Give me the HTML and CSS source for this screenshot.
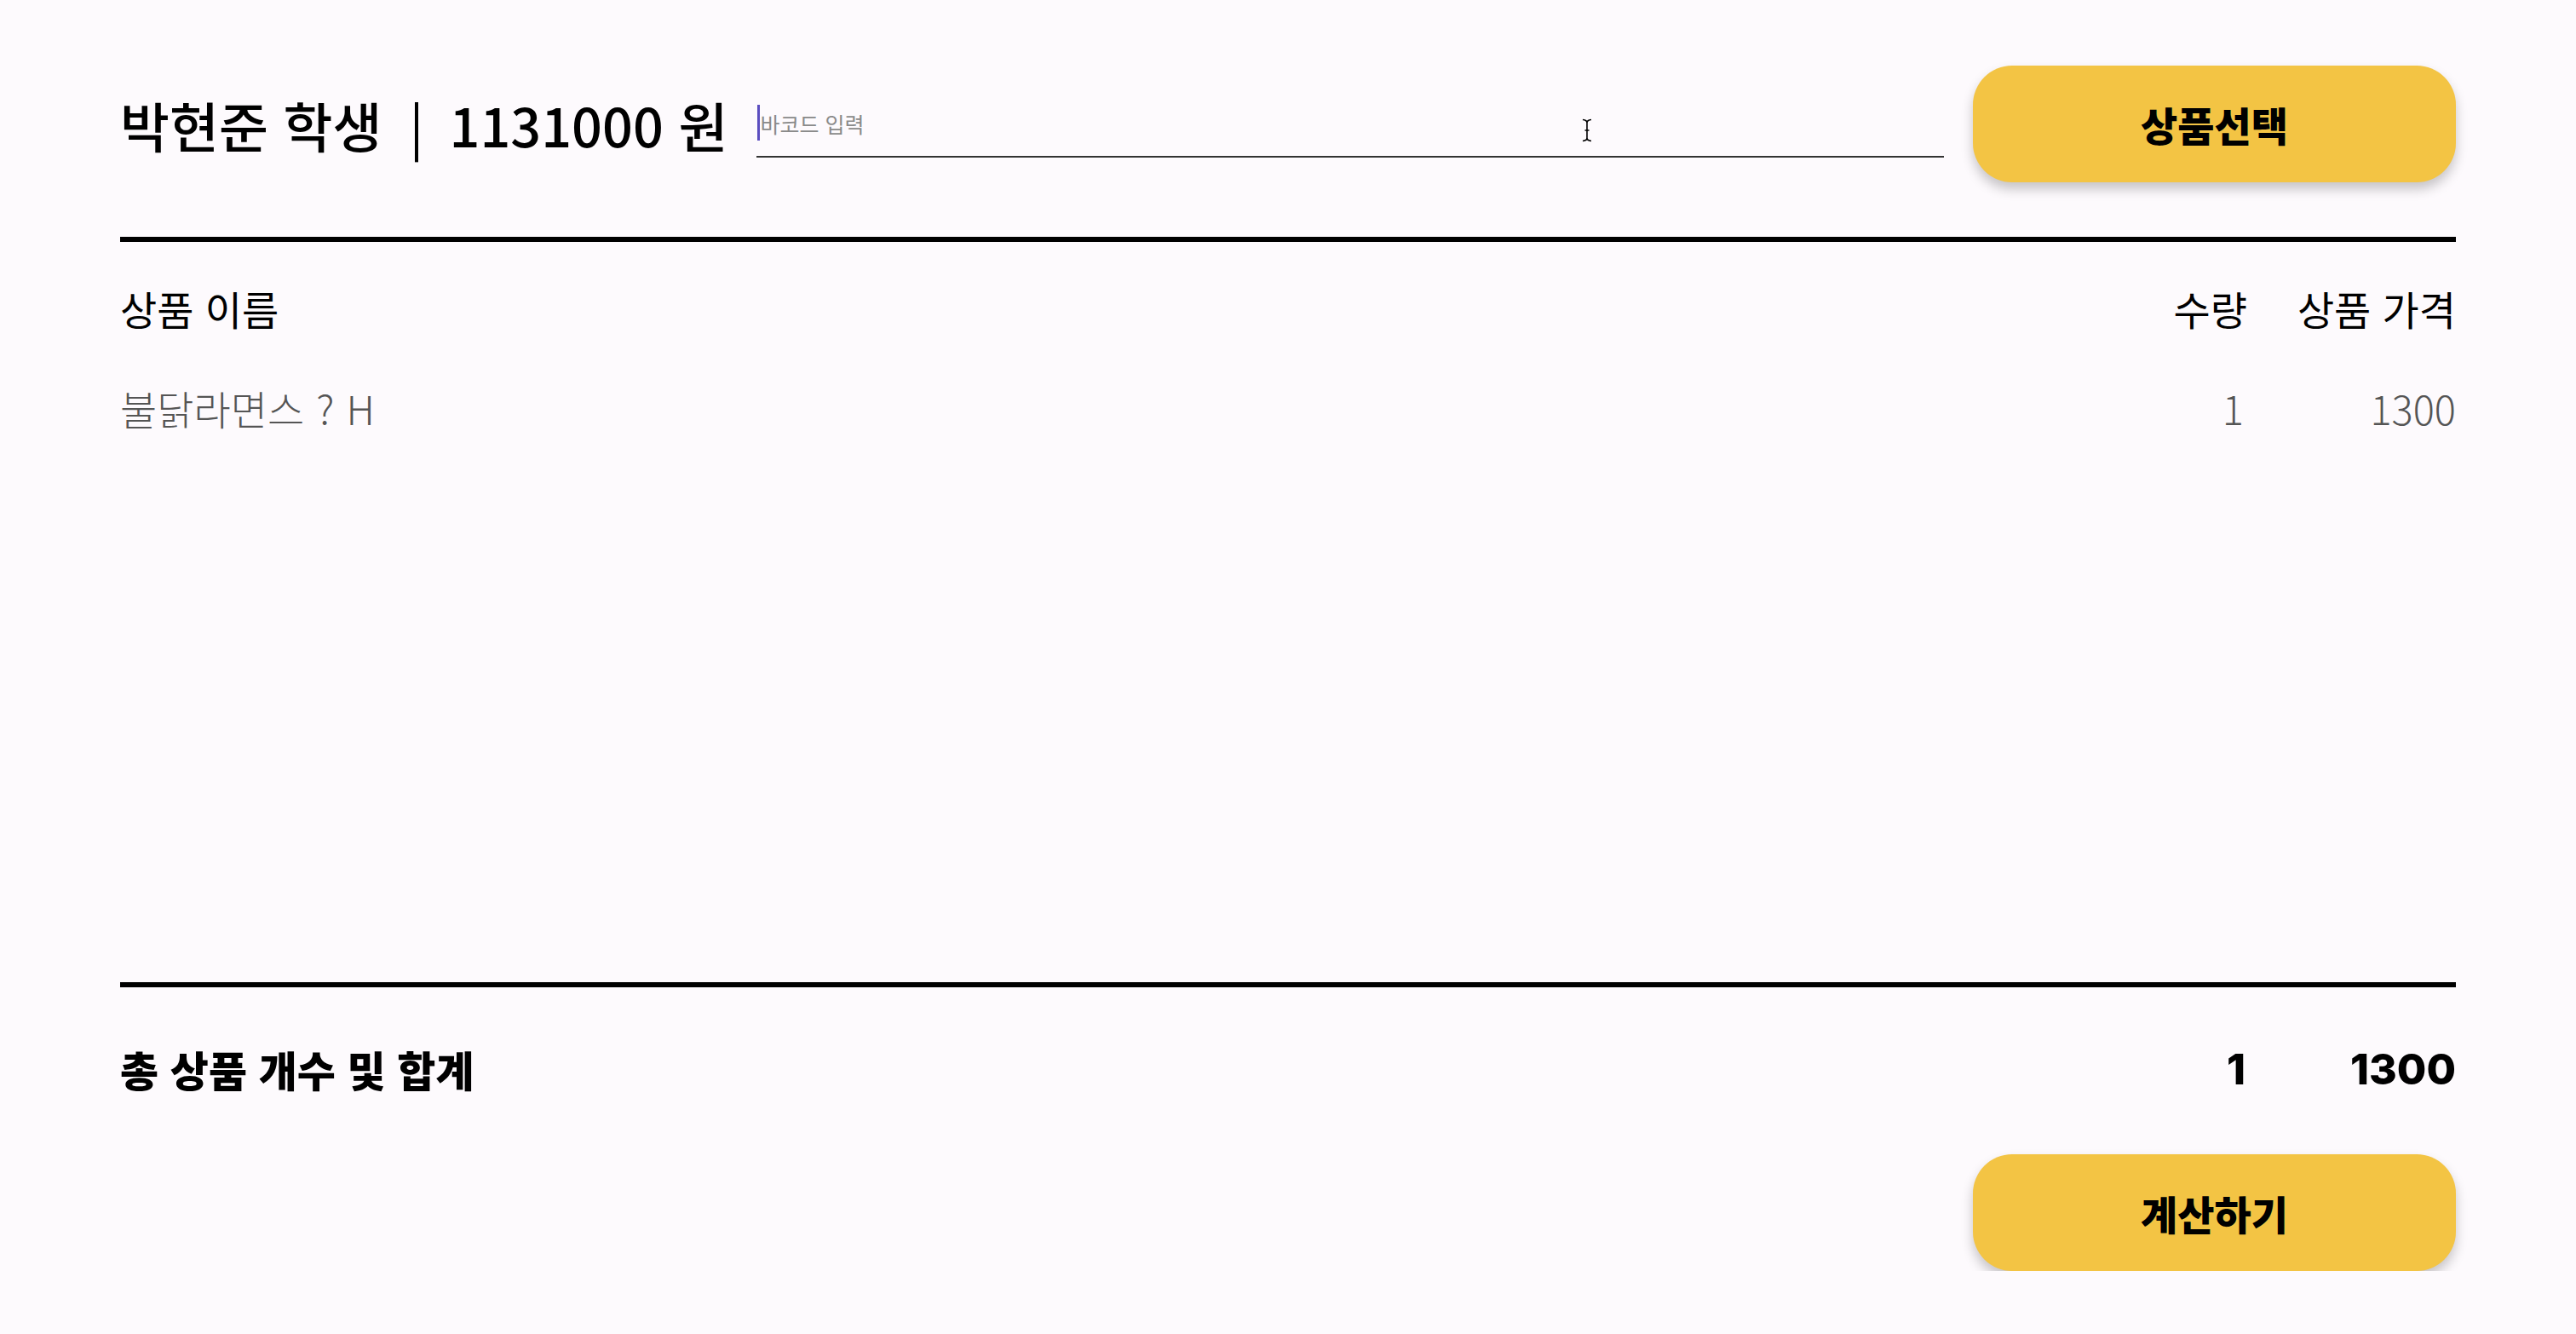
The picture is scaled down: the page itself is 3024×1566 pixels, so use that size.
FILE: index.html
```html
<!DOCTYPE html>
<html lang="ko">
<head>
<meta charset="utf-8">
<title>계산</title>
<link rel="stylesheet" href="styles.css">
</head>
<body>
<div class="app">
  <header class="top">
    <h1 class="title"><span>박현준 학생</span><span class="sep">|</span><span>1131000 원</span></h1>
    <div class="barcode">
      <input class="barcode-input" type="text" placeholder="바코드 입력">
      <span class="caret"></span>
      <svg class="ibeam" width="14" height="28" viewBox="0 0 14 28"><path d="M2 1.5 Q7 2 7 5 Q7 2 12 1.5 M7 5 V23 M2 26.5 Q7 26 7 23 Q7 26 12 26.5 M4.5 14 H9.5" fill="none" stroke="#000" stroke-width="1.6"/></svg>
    </div>
    <button class="btn">상품선택</button>
  </header>
  <hr class="rule">
  <section class="list">
    <div class="row head">
      <span class="c-name">상품 이름</span>
      <span class="c-qty">수량</span>
      <span class="c-price">상품 가격</span>
    </div>
    <div class="row item">
      <span class="c-name">불닭라면스<span class="q">?</span>H</span>
      <span class="c-qty">1</span>
      <span class="c-price">1300</span>
    </div>
  </section>
  <hr class="rule">
  <div class="row total">
    <span class="c-name">총 상품 개수 및 합계</span>
    <span class="c-qty num">1</span>
    <span class="c-price num">1300</span>
  </div>
  <div class="actions">
    <button class="btn">계산하기</button>
  </div>
</div>
</body>
</html>
```

FILE: styles.css
```css
html, body {
  margin: 0;
  padding: 0;
  background: #fdfafd;
}
body {
  font-family: "Noto Sans CJK KR", "Noto Sans", sans-serif;
  color: #000;
}
.app {
  padding: 77px 141px 0 141px;
  display: flex;
  flex-direction: column;
}
.top {
  display: flex;
  align-items: center;
  gap: 34px;
  height: 137px;
}
.title {
  margin: 0;
  font-size: 63px;
  font-weight: 500;
  white-space: nowrap;
  display: flex;
  align-items: center;
  line-height: 1;
}
.sep {
  font-weight: 400;
  margin: 0 30px 0 32px;
}
.barcode {
  flex: 1;
  position: relative;
  align-self: stretch;
  display: flex;
  align-items: flex-start;
}
.barcode-input {
  width: 100%;
  box-sizing: border-box;
  border: none;
  border-bottom: 2px solid #333;
  background: transparent;
  font-family: "Noto Sans CJK KR", sans-serif;
  font-size: 25px;
  line-height: 30px;
  height: 65px;
  padding: 10px 0 23px 4px;
  margin-top: 43px;
  outline: none;
}
.barcode-input::placeholder {
  color: #8a8a8a;
}
.caret {
  position: absolute;
  left: 1px;
  top: 46px;
  width: 3px;
  height: 42px;
  background: #5b4dc0;
}
.ibeam {
  position: absolute;
  left: 968px;
  top: 62px;
}
.btn {
  width: 567px;
  height: 137px;
  border: none;
  border-radius: 46px;
  background: #f3c444;
  box-shadow: 0 8px 14px rgba(0, 0, 0, 0.22);
  font-family: "Noto Sans CJK KR", sans-serif;
  font-size: 47px;
  font-weight: 900;
  color: #000;
  cursor: pointer;
}
.rule {
  margin: 0;
  border: none;
  height: 6px;
  background: #000;
}
.top + .rule {
  margin-top: 64px;
}
.list {
  height: 869px;
  box-sizing: border-box;
  padding-top: 48px;
  display: flex;
  flex-direction: column;
  gap: 57px;
}
.row {
  display: grid;
  grid-template-columns: 1fr 100px 200px;
  column-gap: 45px;
  align-items: center;
  height: 60px;
  font-size: 47px;
  line-height: 60px;
}
.row .c-qty, .row .c-price {
  text-align: right;
  white-space: nowrap;
}
.head {
  font-weight: 400;
}
.item {
  font-weight: 200;
  color: #555;
}
.item .c-qty {
  padding-right: 4px;
}
.item .q {
  margin: 0 14px 0 14px;
}
.total {
  margin-top: 66px;
  font-weight: 900;
  font-size: 49px;
}
.total .num {
  font-family: "Inter", sans-serif;
  font-weight: 800;
  font-size: 50px;
}
.total .c-qty {
  padding-right: 2px;
}
.actions {
  display: flex;
  justify-content: flex-end;
  margin-top: 70px;
}
```
